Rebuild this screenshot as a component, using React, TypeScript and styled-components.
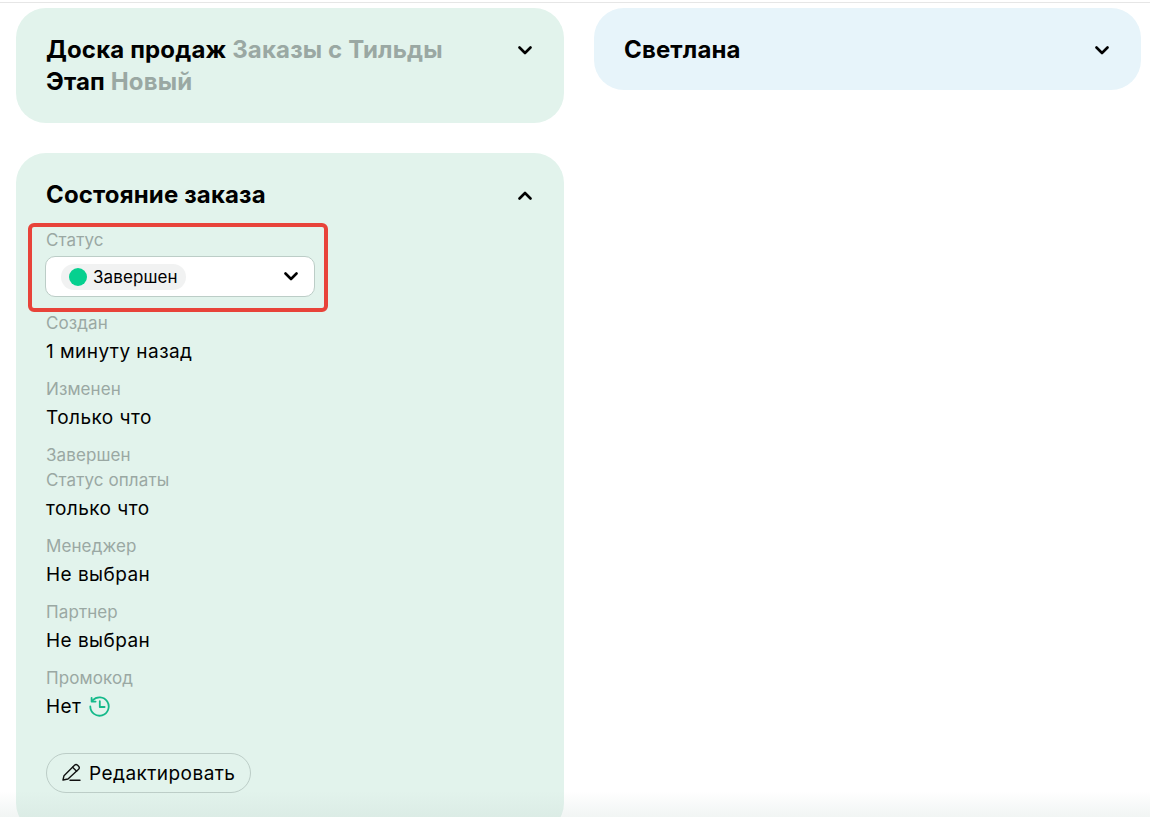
import styled, { createGlobalStyle } from "styled-components";

const GlobalStyle = createGlobalStyle`
  html, body {
    margin: 0;
    background: #fff;
    font-family: "Inter", "Noto Sans", sans-serif;
    color: #000;
  }
`;

const Chevron = ({ up }: { up?: boolean }) => (
  <ChevronSvg viewBox="0 0 14 9" $up={up}>
    <path d="M1.5 1.5 L7 7 L12.5 1.5" fill="none" stroke="#000" strokeWidth="2.6" strokeLinecap="round" strokeLinejoin="round" />
  </ChevronSvg>
);

const PencilIcon = () => (
  <PencilSvg viewBox="0 0 19 18" fill="none" stroke="#111" strokeWidth="1.4" strokeLinecap="round" strokeLinejoin="round">
    <path d="M1 17 L2 12.7 L12.5 2.2 Q14 0.8 15.6 2.2 L16.6 3.2 Q18 4.8 16.6 6.3 L6 16 Z" />
    <path d="M10.6 4.2 L14.6 8.2" />
    <path d="M8 17.2 H18" />
  </PencilSvg>
);

const HistoryIcon = () => (
  <HistorySvg viewBox="0 0 21 21" fill="none" stroke="#14b98a" strokeWidth="1.8" strokeLinecap="round" strokeLinejoin="round">
    <path d="M3.6 4.4 A9.2 9.2 0 1 1 1.3 10.5" />
    <path d="M2.6 1.8 V5.6 H6.6" />
    <path d="M10.8 5.2 V11 H15.6" />
  </HistorySvg>
);

const App = () => {
  return (
    <Page>
      <GlobalStyle />
      <TopLine />
      <Columns>
        <Column>
          <Card $bottom={25}>
            <CardHeader>
              <Title>
                Доска продаж <Muted>Заказы с Тильды</Muted>
                <br />
                Этап <Muted>Новый</Muted>
              </Title>
              <Chevron />
            </CardHeader>
          </Card>
          <Card $bottom={40}>
            <CardHeader>
              <Title>Состояние заказа</Title>
              <Chevron up />
            </CardHeader>
            <StatusField>
              <Highlight />
              <Label>Статус</Label>
              <Select>
                <Pill>
                  <Dot />
                  Завершен
                </Pill>
                <Chevron />
              </Select>
            </StatusField>
            <Label>Создан</Label>
            <Value>1 минуту назад</Value>
            <Label>Изменен</Label>
            <Value>Только что</Value>
            <Label>Завершен</Label>
            <Label>Статус оплаты</Label>
            <Value>только что</Value>
            <Label>Менеджер</Label>
            <Value>Не выбран</Value>
            <Label>Партнер</Label>
            <Value>Не выбран</Value>
            <Label>Промокод</Label>
            <Value>
              Нет <HistoryIcon />
            </Value>
            <EditButton>
              <PencilIcon />
              Редактировать
            </EditButton>
          </Card>
        </Column>
        <Column>
          <BlueCard $bottom={24}>
            <CardHeader>
              <Title>Светлана</Title>
              <Chevron />
            </CardHeader>
          </BlueCard>
        </Column>
      </Columns>
      <BottomFade />
    </Page>
  );
};

export default App;

const Page = styled.div`
  position: relative;
  height: 817px;
  overflow: hidden;
`;

const TopLine = styled.div`
  height: 1px;
  margin-top: 2px;
  background: #e6e6e6;
`;

const Columns = styled.div`
  display: grid;
  grid-template-columns: 548px 547px;
  column-gap: 30px;
  padding: 5px 0 0 16px;
`;

const Column = styled.div`
  display: flex;
  flex-direction: column;
  align-items: stretch;
  gap: 30px;
`;

const Card = styled.div<{ $bottom: number }>`
  background: #e2f3ec;
  border-radius: 30px;
  padding: 26px 30px ${(p) => p.$bottom}px;
`;

const BlueCard = styled(Card)`
  background: #e7f4fa;
`;

const CardHeader = styled.div`
  display: flex;
  justify-content: space-between;
  align-items: flex-start;
  padding-right: 2px;
`;

const Title = styled.div`
  font-size: 24px;
  font-weight: 700;
  line-height: 32px;
  letter-spacing: 0.15px;
`;

const Muted = styled.span`
  color: #9aa8a3;
`;

const ChevronSvg = styled.svg<{ $up?: boolean }>`
  width: 14px;
  height: 9px;
  margin-top: 12px;
  flex-shrink: 0;
  transform: ${(p) => (p.$up ? "rotate(180deg)" : "none")};
`;

const PencilSvg = styled.svg`
  width: 19px;
  height: 18px;
  margin-bottom: 2px;
`;

const HistorySvg = styled.svg`
  width: 21px;
  height: 21px;
`;

const StatusField = styled.div`
  position: relative;
  margin: 17px 0 14px;
`;

const Highlight = styled.div`
  position: absolute;
  left: -18px;
  top: -5px;
  width: 300px;
  height: 89px;
  box-sizing: border-box;
  border: 4px solid #e8433a;
  border-radius: 6px;
`;

const Label = styled.div`
  font-size: 17px;
  line-height: 25px;
  letter-spacing: 0.1px;
  color: #9aa8a3;
`;

const Value = styled.div`
  display: flex;
  align-items: center;
  gap: 8px;
  font-size: 19px;
  line-height: 27px;
  letter-spacing: 0.45px;
  margin: 2px 0 12px;
`;

const Select = styled.div`
  display: flex;
  align-items: center;
  justify-content: space-between;
  box-sizing: border-box;
  width: 270px;
  height: 41px;
  margin: 3px 0 0 -1px;
  padding: 0 16px;
  background: #fff;
  border: 1px solid #bccdc7;
  border-radius: 10px;

  svg {
    margin-top: 0;
  }
`;

const Pill = styled.div`
  display: flex;
  align-items: center;
  gap: 6px;
  height: 26px;
  margin-left: -1px;
  padding: 0 8px 0 8px;
  background: #f1f2f2;
  border-radius: 13px;
  font-size: 17px;
  letter-spacing: 0.1px;
`;

const Dot = styled.span`
  width: 18px;
  height: 18px;
  border-radius: 50%;
  background: #06d08f;
`;

const EditButton = styled.button`
  display: flex;
  align-items: center;
  gap: 8px;
  height: 40px;
  margin-top: 33px;
  padding: 0 15px;
  background: transparent;
  border: 1px solid #bccdc7;
  border-radius: 20px;
  font-family: inherit;
  font-size: 19px;
  letter-spacing: 0.45px;
  color: #000;
`;

const BottomFade = styled.div`
  position: absolute;
  left: 0;
  right: 0;
  bottom: 0;
  height: 26px;
  background: linear-gradient(to bottom, rgba(200, 215, 210, 0), rgba(200, 215, 210, 0.25));
  pointer-events: none;
`;
